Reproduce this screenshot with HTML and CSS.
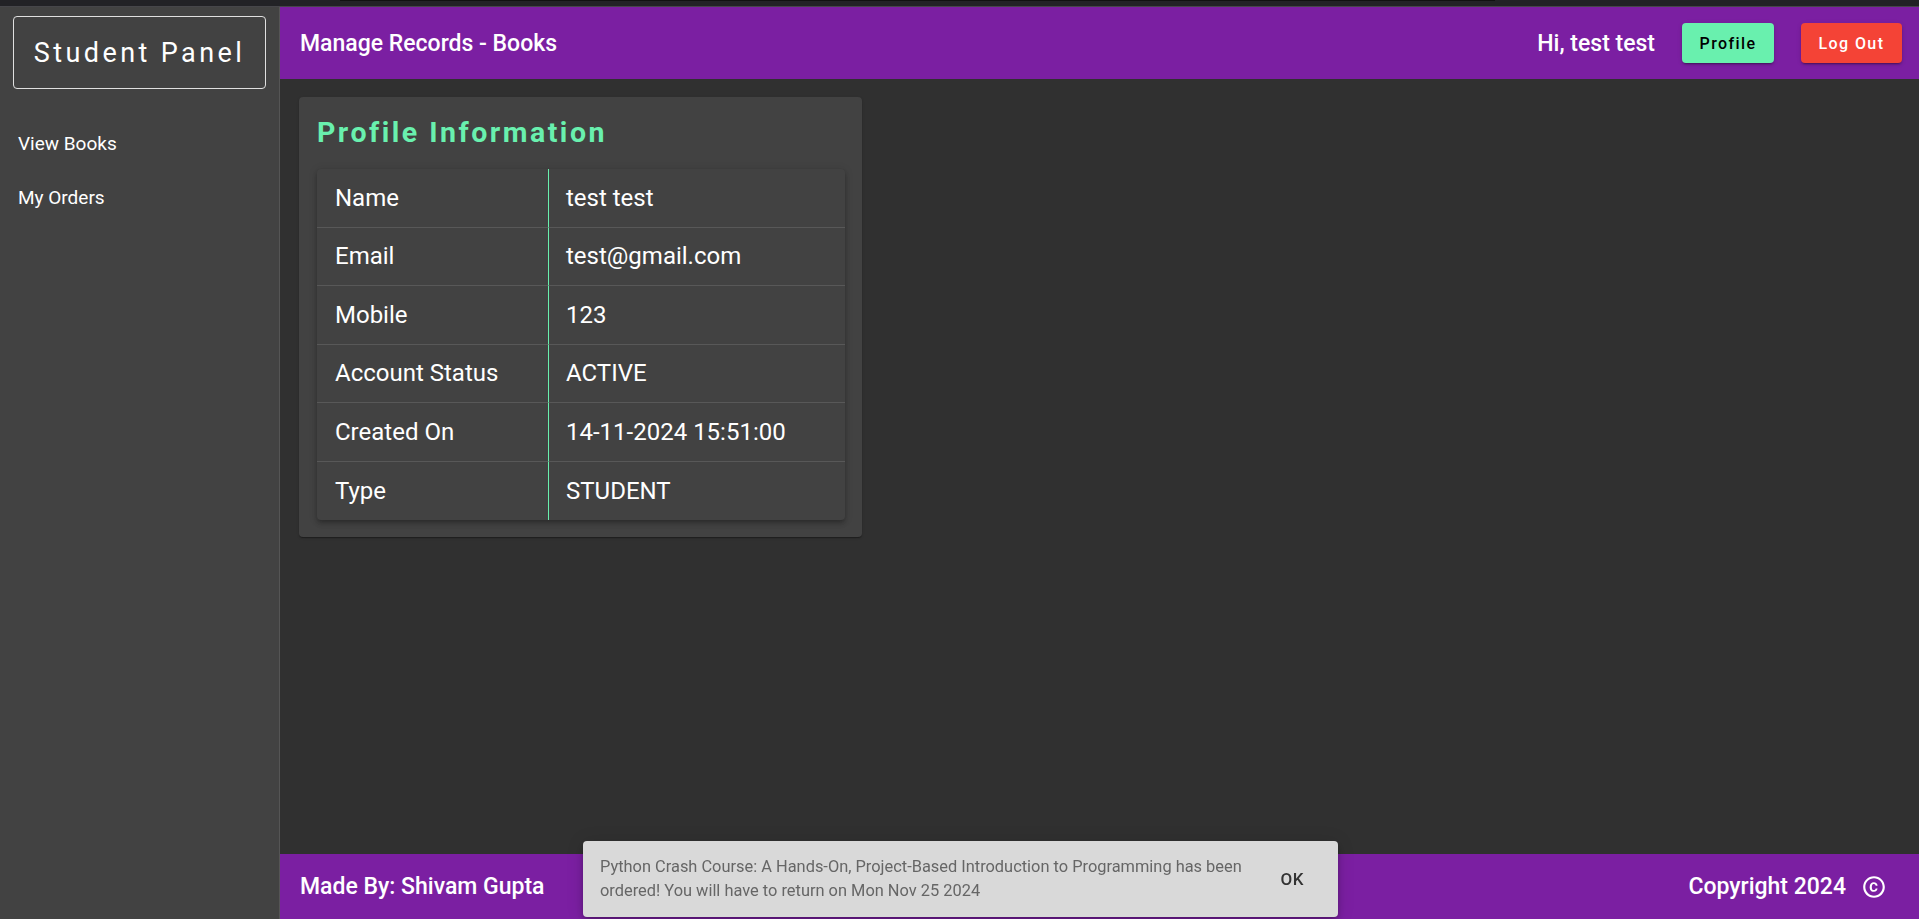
FILE: index.html
```html
<!DOCTYPE html>
<html lang="en">
<head>
<meta charset="utf-8">
<title>Student Panel</title>
<link rel="stylesheet" href="styles.css">
</head>
<body>
<div class="topstrip"><div class="topline"></div></div>
<div class="app">
  <aside class="sidebar">
    <div class="brand">Student Panel</div>
    <nav class="nav">
      <a class="nav-item">View Books</a>
      <a class="nav-item">My Orders</a>
    </nav>
  </aside>
  <div class="main">
    <header class="header">
      <div class="header-title">Manage Records - Books</div>
      <div class="header-right">
        <span class="greet">Hi, test test</span>
        <button class="btn btn-profile">Profile</button>
        <button class="btn btn-logout">Log Out</button>
      </div>
    </header>
    <section class="content">
      <div class="card">
        <h2 class="card-title">Profile Information</h2>
        <div class="table">
          <div class="row"><div class="cell key">Name</div><div class="cell val">test test</div></div>
          <div class="row"><div class="cell key">Email</div><div class="cell val">test@gmail.com</div></div>
          <div class="row"><div class="cell key">Mobile</div><div class="cell val">123</div></div>
          <div class="row"><div class="cell key">Account Status</div><div class="cell val">ACTIVE</div></div>
          <div class="row"><div class="cell key">Created On</div><div class="cell val">14-11-2024 15:51:00</div></div>
          <div class="row"><div class="cell key">Type</div><div class="cell val">STUDENT</div></div>
        </div>
      </div>
    </section>
    <footer class="footer">
      <div class="footer-left">Made By: Shivam Gupta</div>
      <div class="footer-right">
        <span>Copyright 2024</span>
        <svg class="copy-icon" viewBox="0 0 24 24" width="26" height="26"><path fill="#fff" d="M11.88 9.14c1.28.06 1.61 1.15 1.63 1.66h1.79c-.08-1.98-1.49-3.19-3.45-3.19C9.64 7.61 8 9 8 12.14c0 1.94.93 4.24 3.84 4.24 2.22 0 3.41-1.65 3.44-2.95h-1.79c-.03.59-.45 1.38-1.63 1.44-1.31-.04-1.86-1.06-1.860-2.73 0-2.89 1.28-2.98 1.88-3zM12 2C6.48 2 2 6.48 2 12s4.48 10 10 10 10-4.48 10-10S17.52 2 12 2zm0 18c-4.41 0-8-3.59-8-8s3.59-8 8-8 8 3.59 8 8-3.59 8-8 8z"/></svg>
      </div>
    </footer>
  </div>
</div>
<div class="snackbar">
  <div class="snack-msg">Python Crash Course: A Hands-On, Project-Based Introduction to Programming has been ordered! You will have to return on Mon Nov 25 2024</div>
  <button class="snack-ok">OK</button>
</div>
</body>
</html>
```
FILE: styles.css
```css
* { box-sizing: border-box; }
html, body { margin: 0; padding: 0; height: 100%; }
body {
  background: #303030;
  font-family: Roboto, "Noto Sans", "Liberation Sans", sans-serif;
  color: #fff;
  overflow: hidden;
}
.topstrip {
  height: 7px;
  background: #222226;
  border-bottom: 1px solid #46464a;
  padding: 0 424px 0 340px;
}
.topline { height: 1px; background: #111; }
.app {
  display: flex;
  height: 912px;
}
.sidebar {
  width: 280px;
  flex: none;
  background: #424242;
  border-right: 1px solid #555;
  padding: 9px 13px 0 13px;
}
.brand {
  height: 73px;
  border: 1px solid #e0e0e0;
  border-radius: 4px;
  display: flex;
  align-items: center;
  justify-content: center;
  font-size: 27px;
  letter-spacing: 3.4px;
  font-weight: 400;
}
.nav {
  display: flex;
  flex-direction: column;
  padding-top: 37px;
}
.nav-item {
  font-size: 19px;
  height: 54px;
  line-height: 54px;
  padding-left: 5px;
  color: #fff;
  margin-top: -9px;
}
.nav-item + .nav-item { margin-top: 0; }
.main {
  flex: 1;
  display: flex;
  flex-direction: column;
  min-width: 0;
}
.header {
  height: 72px;
  background: #7b1fa2;
  display: flex;
  align-items: center;
  justify-content: space-between;
  padding: 0 17px 0 20px;
}
.header-title { font-size: 23px; font-weight: 500; }
.header-right { display: flex; align-items: center; }
.greet { font-size: 23px; font-weight: 500; margin-right: 27px; }
.btn {
  font-family: inherit;
  border: none;
  border-radius: 4px;
  height: 40px;
  font-size: 16px;
  font-weight: 500;
  letter-spacing: 1.4px;
  box-shadow: 0 3px 1px -2px rgba(0,0,0,.2), 0 2px 2px 0 rgba(0,0,0,.14), 0 1px 5px 0 rgba(0,0,0,.12);
}
.btn-profile { background: #69f0ae; color: #000; width: 92px; margin-right: 27px; }
.btn-logout { background: #f44336; color: #fff; width: 101px; }
.content {
  flex: 1;
  padding: 18px 19px;
}
.card {
  width: 563px;
  background: #424242;
  border-radius: 4px;
  padding: 18px 17px 17px 18px;
  box-shadow: 0 2px 1px -1px rgba(0,0,0,.2), 0 1px 1px 0 rgba(0,0,0,.14), 0 1px 3px 0 rgba(0,0,0,.12);
}
.card-title {
  margin: 0 0 18px 0;
  height: 36px;
  line-height: 36px;
  color: #69f0ae;
  font-size: 28.5px;
  font-weight: 700;
  letter-spacing: 2.5px;
}
.table {
  background: #424242;
  border-radius: 4px;
  box-shadow: 0 2px 4px -1px rgba(0,0,0,.2), 0 4px 5px 0 rgba(0,0,0,.14), 0 1px 10px 0 rgba(0,0,0,.12);
}
.row {
  display: grid;
  grid-template-columns: 232px 1fr;
  height: 58.5px;
}
.row:not(:last-child) .cell { border-bottom: 1px solid #585858; }
.cell {
  display: flex;
  align-items: center;
  font-size: 24px;
}
.key { padding-left: 18px; border-right: 1px solid #69f0ae; }
.val { padding-left: 17px; }
.footer {
  height: 65px;
  background: #7b1fa2;
  display: flex;
  align-items: center;
  justify-content: space-between;
  padding: 0 32px 0 20px;
  font-size: 23px;
  font-weight: 500;
}
.footer-right { display: flex; align-items: center; gap: 15px; }
.copy-icon { display: block; }
.snackbar {
  position: fixed;
  left: 583px;
  bottom: 2px;
  width: 755px;
  height: 76px;
  background: #d9d9d9;
  border-radius: 4px;
  display: flex;
  align-items: center;
  padding: 0 16px 0 17px;
  box-shadow: 0 3px 5px -1px rgba(0,0,0,.2), 0 6px 10px 0 rgba(0,0,0,.14), 0 1px 18px 0 rgba(0,0,0,.12);
}
.snack-msg {
  flex: 1;
  font-size: 16.4px;
  line-height: 24px;
  color: #666;
}
.snack-ok {
  font-family: inherit;
  background: none;
  border: none;
  font-size: 17px;
  font-weight: 500;
  color: #333;
  letter-spacing: 0.5px;
  padding: 8px 18px 8px 8px;
}
```
